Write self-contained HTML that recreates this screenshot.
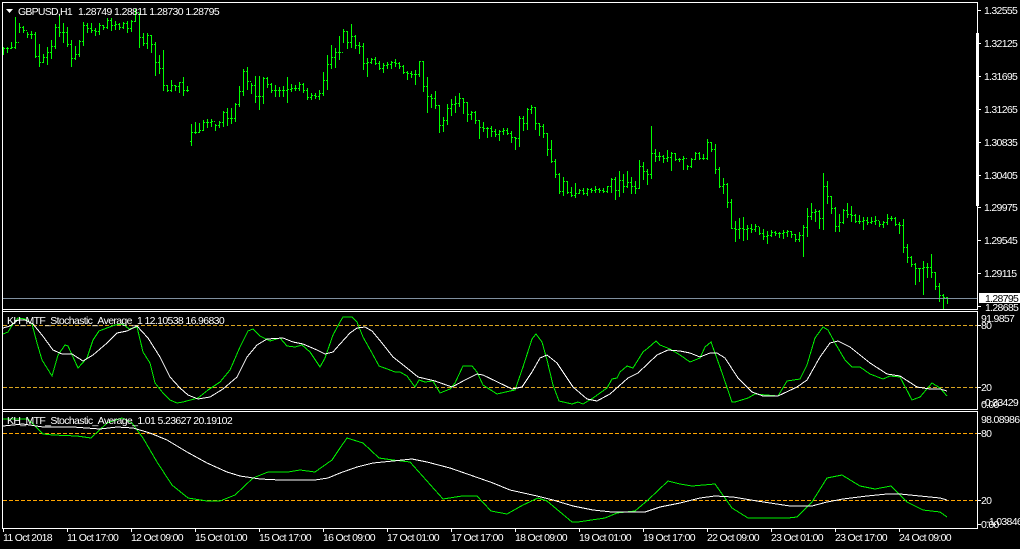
<!DOCTYPE html>
<html><head><meta charset="utf-8"><title>GBPUSD,H1</title>
<style>
html,body{margin:0;padding:0;background:#000;width:1020px;height:549px;overflow:hidden}
svg{display:block}
text{font-family:"Liberation Sans",sans-serif;font-size:10.5px;letter-spacing:-.68px;fill:#fff}
</style></head><body>
<svg width="1020" height="549" viewBox="0 0 1020 549" xmlns="http://www.w3.org/2000/svg">
<rect width="1020" height="549" fill="#000"/>
<g fill="none" stroke="#00ff00" stroke-width="1" shape-rendering="crispEdges">
<path transform="translate(.5 0)" d="M3 47V55M7 47V53M11 42V49M15 17V49M19 23V33M23 26V33M27 32V38M31 31V39M35 32V58M39 44V67M43 54V63M47 47V65M51 40V59M55 24V49M59 15V37M63 23V43M67 27V47M71 40V67M75 46V60M79 40V57M83 22V46M87 23V33M91 23V33M95 28V36M99 23V35M103 25V30M107 18V29M111 18V31M115 21V30M119 23V30M123 22V29M127 21V33M131 20V32M135 9V22M139 13V48M143 33V46M147 33V49M151 35V53M155 42V76M159 55V74M163 50V91M167 85V92M171 80V92M175 85V91M179 82V93M183 77V96M187 86V92M191 124V146M195 122V134M199 123V133M203 120V131M207 119V128M211 119V127M215 124V131M219 121V128M223 111V127M227 108V126M231 108V124M235 103V122M239 86V107M243 69V96M247 67V90M251 83V94M255 76V103M259 76V110M263 77V104M267 77V88M271 83V93M275 85V97M279 87V97M283 86V97M287 77V103M291 84V92M295 85V91M299 82V91M303 83V93M307 88V100M311 93V100M315 93V99M319 90V100M323 72V96M327 55V90M331 45V69M335 48V68M339 36V60M343 29V43M347 31V49M351 24V48M355 35V49M359 42V54M363 43V70M367 58V77M371 58V64M375 57V65M379 61V70M383 63V73M387 62V69M391 61V69M395 59V67M399 62V69M403 65V74M407 71V80M411 71V78M415 70V85M419 61V77M423 61V92M427 77V113M431 94V108M435 91V109M439 105V133M443 117V132M447 104V125M451 99V116M455 96V113M459 93V107M463 98V114M467 102V122M471 111V120M475 111V124M479 120V139M483 122V132M487 127V138M491 126V137M495 129V137M499 130V141M503 128V135M507 128V135M511 131V143M515 137V150M519 116V147M523 116V131M527 108V130M531 105V114M535 107V130M539 123V136M543 124V138M547 133V156M551 140V163M555 159V178M559 173V194M563 177V196M567 181V194M571 187V197M575 183V198M579 189V194M583 188V195M587 188V196M591 188V193M595 186V193M599 188V193M603 188V193M607 186V193M611 178V193M615 177V200M619 171V197M623 174V193M627 171V188M631 177V194M635 181V194M639 160V189M643 162V180M647 169V185M651 126V179M655 149V162M659 152V161M663 155V163M667 150V162M671 152V171M675 153V161M679 158V162M683 156V170M687 165V170M691 158V168M695 152V160M699 152V160M703 154V160M707 139V160M711 142V152M715 144V174M719 167V188M723 178V194M727 183V208M731 199V229M735 221V242M739 218V239M743 217V241M747 225V240M751 224V233M755 224V232M759 227V235M763 229V240M767 231V244M771 230V237M775 231V236M779 232V238M783 230V239M787 230V237M791 231V238M795 234V242M799 232V242M803 225V257M807 208V237M811 203V220M815 209V222M819 210V229M823 173V230M827 181V204M831 196V214M835 207V232M839 214V232M843 209V224M847 203V218M851 206V222M855 214V223M859 215V224M863 217V230M867 217V225M871 217V224M875 216V225M879 221V227M883 221V228M887 214V225M891 216V221M895 217V226M899 222V234M903 219V253M907 244V263M911 256V267M915 263V285M919 268V282M923 261V295M927 263V278M931 254V278M935 272V290M939 283V302M943 294V309M947 297V304"/>
<path transform="translate(0 .5)" stroke-dasharray="1 1" d="M4 48h3M8 48h3M12 47h3M16 42h3M20 27h3M24 30h3M28 34h3M32 34h3M36 56h3M40 62h3M44 57h3M48 52h3M52 46h3M56 27h3M60 32h3M64 32h3M68 44h3M72 58h3M76 54h3M80 41h3M84 25h3M88 28h3M92 30h3M96 31h3M100 25h3M104 27h3M108 20h3M112 25h3M116 24h3M120 27h3M124 23h3M128 28h3M132 21h3M136 12h3M140 37h3M144 43h3M148 35h3M152 44h3M156 62h3M160 68h3M164 85h3M168 90h3M172 85h3M176 86h3M180 82h3M184 90h3M188 90h2M190 141h1M192 132h3M196 132h3M200 130h3M204 122h3M208 122h3M212 121h3M216 125h3M220 122h3M224 112h3M228 118h3M232 118h3M236 104h3M240 91h3M244 71h3M248 81h3M252 85h3M256 96h3M260 96h3M264 78h3M268 84h3M272 90h3M276 90h3M280 90h3M284 90h3M288 89h3M292 88h3M296 88h3M300 84h3M304 90h3M308 97h3M312 95h3M316 96h3M320 93h3M324 80h3M328 64h3M332 57h3M336 52h3M340 52h3M344 31h3M348 42h3M352 36h3M356 45h3M360 46h3M364 63h3M368 62h3M372 59h3M376 63h3M380 68h3M384 65h3M388 64h3M392 62h3M396 63h3M400 66h3M404 72h3M408 73h3M412 74h3M416 74h3M420 61h3M424 86h3M428 96h3M432 98h3M436 105h3M440 125h3M444 120h3M448 108h3M452 104h3M456 103h3M460 98h3M464 102h3M468 114h3M472 112h3M476 120h3M480 127h3M484 128h3M488 128h3M492 131h3M496 134h3M500 131h3M504 130h3M508 133h3M512 137h3M516 138h3M520 118h3M524 123h3M528 109h3M532 107h3M536 123h3M540 126h3M544 133h3M548 149h3M552 161h3M556 174h3M560 191h3M564 181h3M568 192h3M572 195h3M576 193h3M580 190h3M584 193h3M588 189h3M592 190h3M596 189h3M600 190h3M604 191h3M608 186h3M612 179h3M616 190h3M620 180h3M624 186h3M628 182h3M632 186h3M636 188h3M640 166h3M644 171h3M648 174h3M652 153h3M656 156h3M660 156h3M664 158h3M668 157h3M672 153h3M676 159h3M680 159h3M684 158h3M688 166h3M692 159h3M696 153h3M700 158h3M704 158h3M708 142h3M712 149h3M716 169h3M720 186h3M724 184h3M728 202h3M732 228h3M736 229h3M740 228h3M744 229h3M748 228h3M752 229h3M756 226h3M760 233h3M764 236h3M768 235h3M772 232h3M776 233h3M780 233h3M784 232h3M788 231h3M792 234h3M796 239h3M800 235h3M804 227h3M808 216h3M812 212h3M816 211h3M820 218h3M824 186h3M828 196h3M832 208h3M836 226h3M840 222h3M844 210h3M848 214h3M852 215h3M856 221h3M860 221h3M864 220h3M868 222h3M872 221h3M876 220h3M880 224h3M884 222h3M888 218h3M892 218h3M896 224h3M900 225h3M904 247h3M908 257h3M912 264h3M916 268h3M920 268h3M924 267h3M928 267h3M932 272h3M936 286h3M940 295h3M944 297h3M948 298h1"/>
</g>
<rect x="3" y="298" width="974" height="1" fill="#8090a0"/>
<g fill="none" stroke-width="1" shape-rendering="crispEdges">
<path d="M3 325.5H977M3 387.5H977" stroke="#daa520" stroke-dasharray="4 2"/>
<path d="M3 433.5H977M3 500.5H977" stroke="#ffa500" stroke-dasharray="4 2"/>
<polyline stroke="#00f000" points="3,334 8,332 13,324 18,318 25,319 32,324 37,343 42,360 52,376 58,355 65,345 68,346 78,368 87,358 93,340 99,331 107,328 115,325 123,324 129,329 137,327 143,352 150,363 155,383 163,393 170,400 177,403 183,402 198,398 208,390 220,382 230,370 240,347 248,331 253,329 260,336 270,341 280,338 287,346 295,347 302,345 310,352 320,367 325,358 333,335 340,322 343,317 352,317 357,322 363,337 372,353 379,366 390,370 395,372 400,372 407,376 415,387 419,380 425,382 433,381 440,393 450,389 455,383 463,366 472,366 477,372 483,385 497,394 510,391 515,390 523,367 532,339 536,334 542,342 547,360 553,385 559,401 572,404 578,402 583,404 593,398 607,388 612,379 617,378 620,372 627,366 633,368 643,352 648,348 656,341 660,345 670,349 680,355 690,362 700,358 705,347 711,342 720,367 732,402 735,402 748,398 755,394 778,396 787,381 800,379 807,365 815,338 823,327 828,330 835,343 845,360 852,367 860,367 870,374 883,379 890,376 900,377 912,400 920,397 932,383 940,388 947,396"/>
<polyline stroke="#fff" points="3,328 10,326 18,320 25,320 33,324 42,335 53,350 62,354 72,354 83,361 93,355 107,343 117,333 127,331 137,326 148,338 160,357 170,377 180,388 188,395 198,399 210,397 223,389 237,377 247,357 257,345 267,339 283,338 293,342 303,344 317,350 325,354 333,352 340,344 350,333 357,328 365,327 372,331 382,343 393,357 407,368 418,377 435,381 452,387 465,380 477,374 483,375 512,389 522,387 532,372 540,358 547,355 557,363 573,387 587,399 597,401 610,394 628,378 638,373 657,355 668,350 680,351 690,353 700,357 710,353 717,353 725,358 738,378 752,392 763,396 778,396 797,387 807,380 820,357 830,343 838,341 850,347 870,363 887,374 900,376 917,387 930,389 940,389 947,391"/>
<polyline stroke="#00f000" points="3,419 28,419 43,434 53,435 77,436 91,438 107,423 122,418 132,423 143,438 157,462 172,485 188,498 207,501 220,501 235,495 253,478 268,472 288,472 300,470 315,472 332,460 340,448 347,438 363,443 379,458 393,460 410,462 443,499 462,496 477,496 491,511 507,514 523,505 538,498 547,501 572,522 578,522 605,518 617,513 635,511 648,500 668,481 680,484 692,486 715,484 732,508 748,518 762,518 788,518 797,517 812,502 827,478 842,475 860,486 875,489 891,486 907,502 923,510 940,512 947,517"/>
<polyline stroke="#fff" points="3,426 23,424 43,427 73,427 100,429 117,427 133,428 150,433 167,440 187,452 207,463 227,472 240,476 260,479 280,480 315,480 328,478 340,473 357,467 373,463 393,461 412,459 427,462 450,468 473,476 493,483 510,490 537,496 553,500 573,506 593,510 612,512 645,512 660,507 680,503 700,498 715,496 733,497 757,501 790,506 812,506 827,502 843,499 867,496 887,494 900,494 920,496 940,498 947,500"/>
</g>
<g fill="#fff" shape-rendering="crispEdges">
<rect x="2" y="2" width="976" height="1"/>
<rect x="2" y="309" width="976" height="1"/>
<rect x="2" y="311" width="976" height="1"/>
<rect x="2" y="409" width="976" height="1"/>
<rect x="2" y="411" width="976" height="1"/>
<rect x="2" y="528" width="976" height="1"/>
<rect x="2" y="2" width="1" height="527"/>
<rect x="977" y="2" width="1" height="308"/>
<rect x="977" y="311" width="1" height="99"/>
<rect x="977" y="411" width="1" height="118"/>
<rect x="976" y="33" width="3" height="173"/>
<rect x="978" y="10" width="3" height="1"/><rect x="978" y="43" width="3" height="1"/><rect x="978" y="76" width="3" height="1"/><rect x="978" y="109" width="3" height="1"/><rect x="978" y="142" width="3" height="1"/><rect x="978" y="175" width="3" height="1"/><rect x="978" y="207" width="3" height="1"/><rect x="978" y="240" width="3" height="1"/><rect x="978" y="273" width="3" height="1"/><rect x="978" y="306" width="3" height="1"/>
<rect x="978" y="325" width="3" height="1"/><rect x="978" y="387" width="3" height="1"/>
<rect x="978" y="433" width="3" height="1"/><rect x="978" y="500" width="3" height="1"/><rect x="978" y="524" width="3" height="1"/>
<rect x="3" y="528" width="1" height="4"/><rect x="67" y="528" width="1" height="4"/><rect x="131" y="528" width="1" height="4"/><rect x="195" y="528" width="1" height="4"/><rect x="259" y="528" width="1" height="4"/><rect x="323" y="528" width="1" height="4"/><rect x="387" y="528" width="1" height="4"/><rect x="451" y="528" width="1" height="4"/><rect x="515" y="528" width="1" height="4"/><rect x="579" y="528" width="1" height="4"/><rect x="643" y="528" width="1" height="4"/><rect x="707" y="528" width="1" height="4"/><rect x="771" y="528" width="1" height="4"/><rect x="835" y="528" width="1" height="4"/><rect x="899" y="528" width="1" height="4"/>
<rect x="979" y="293" width="41" height="10"/>
</g>
<polygon points="6,9 13,9 9.5,13" fill="#fff"/>
<text x="18" y="15" textLength="54">GBPUSD,H1</text>
<text x="78" y="15" textLength="141">1.28749 1.28811 1.28730 1.28795</text>
<text x="7" y="324" textLength="217">KH_MTF_Stochastic_Average_1 12.10538 16.96830</text>
<text x="7" y="424" textLength="225">KH_MTF_Stochastic_Average_1.01 5.23627 20.19102</text>
<text x="984" y="14">1.32555</text>
<text x="984" y="47">1.32125</text>
<text x="984" y="80">1.31695</text>
<text x="984" y="113">1.31265</text>
<text x="984" y="146">1.30835</text>
<text x="984" y="179">1.30405</text>
<text x="984" y="211">1.29975</text>
<text x="984" y="244">1.29545</text>
<text x="984" y="277">1.29115</text>
<text x="985" y="311">1.28685</text>
<text x="985" y="302" style="fill:#000">1.28795</text>
<text x="981" y="322">91.9857</text>
<text x="981" y="329">80</text>
<text x="981" y="391">20</text>
<text x="982" y="406">-0.33429</text>
<text x="981" y="408">0.00</text>
<text x="981" y="423">98.08986</text>
<text x="981" y="437">80</text>
<text x="981" y="504">20</text>
<text x="986" y="525">-1.03846</text>
<text x="981" y="528">0.00</text>
<text x="3" y="541">11 Oct 2018</text>
<text x="67" y="541">11 Oct 17:00</text>
<text x="131" y="541">12 Oct 09:00</text>
<text x="195" y="541">15 Oct 01:00</text>
<text x="259" y="541">15 Oct 17:00</text>
<text x="323" y="541">16 Oct 09:00</text>
<text x="387" y="541">17 Oct 01:00</text>
<text x="451" y="541">17 Oct 17:00</text>
<text x="515" y="541">18 Oct 09:00</text>
<text x="579" y="541">19 Oct 01:00</text>
<text x="643" y="541">19 Oct 17:00</text>
<text x="707" y="541">22 Oct 09:00</text>
<text x="771" y="541">23 Oct 01:00</text>
<text x="835" y="541">23 Oct 17:00</text>
<text x="899" y="541">24 Oct 09:00</text>
</svg>
</body></html>
